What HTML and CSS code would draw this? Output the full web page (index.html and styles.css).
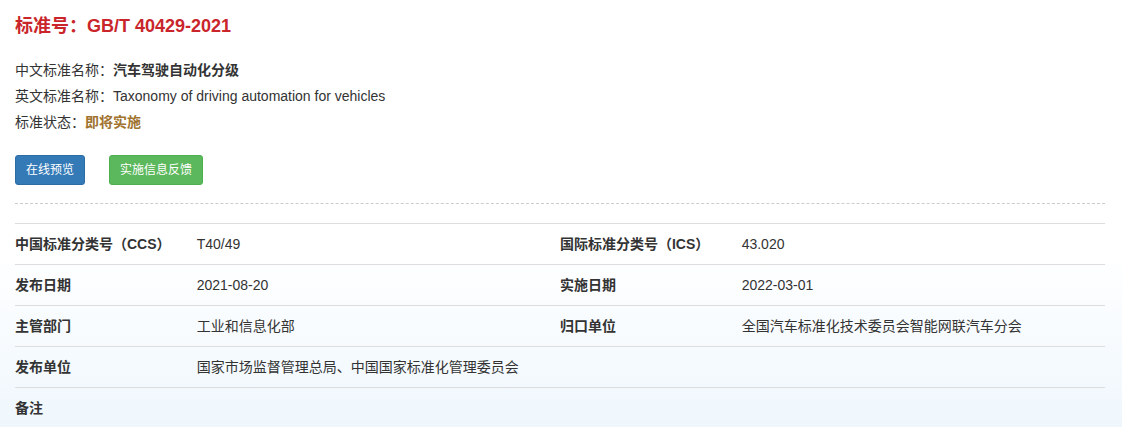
FILE: index.html
```html
<!DOCTYPE html>
<html lang="zh-CN">
<head>
<meta charset="utf-8">
<title>GB/T 40429-2021</title>
<link rel="stylesheet" href="styles.css">
</head>
<body>
<div class="page">
  <h1 class="title">标准号：GB/T 40429-2021</h1>
  <div class="info">
    <div class="info-line">中文标准名称：<b>汽车驾驶自动化分级</b></div>
    <div class="info-line">英文标准名称：Taxonomy of driving automation for vehicles</div>
    <div class="info-line">标准状态：<b class="status">即将实施</b></div>
  </div>
  <div class="actions">
    <a class="btn btn-blue">在线预览</a>
    <a class="btn btn-green">实施信息反馈</a>
  </div>
  <div class="divider"></div>
  <table class="detail">
    <colgroup>
      <col class="c-label"><col class="c-value"><col class="c-label"><col class="c-value">
    </colgroup>
    <tr>
      <th>中国标准分类号（CCS）</th><td>T40/49</td>
      <th>国际标准分类号（ICS）</th><td>43.020</td>
    </tr>
    <tr>
      <th>发布日期</th><td>2021-08-20</td>
      <th>实施日期</th><td>2022-03-01</td>
    </tr>
    <tr>
      <th>主管部门</th><td>工业和信息化部</td>
      <th>归口单位</th><td>全国汽车标准化技术委员会智能网联汽车分会</td>
    </tr>
    <tr>
      <th>发布单位</th><td colspan="3">国家市场监督管理总局、中国国家标准化管理委员会</td>
    </tr>
    <tr>
      <th>备注</th><td colspan="3"></td>
    </tr>
  </table>
</div>
</body>
</html>
```
FILE: styles.css
```css
html, body {
  margin: 0;
  padding: 0;
}
body {
  font-family: "Liberation Sans", "Noto Sans CJK SC", sans-serif;
  font-size: 14px;
  color: #333;
  background: linear-gradient(to bottom, #ffffff 0px, #ffffff 250px, #eff7fd 427px);
  min-height: 427px;
}
.page {
  padding: 15px 17px 0 15px;
}
.title {
  margin: 0;
  font-size: 18px;
  line-height: 22px;
  font-weight: bold;
  color: #c9252b;
}
.info {
  margin-top: 20px;
}
.info-line {
  line-height: 26px;
}
.info-line b {
  font-weight: bold;
}
.status {
  color: #a0732f;
}
.actions {
  display: flex;
  gap: 24px;
  margin-top: 20px;
}
.btn {
  display: inline-block;
  font-size: 12px;
  line-height: 18px;
  padding: 5px 10px;
  border: 1px solid transparent;
  border-radius: 3px;
  color: #fff;
}
.btn-blue {
  background: #337ab7;
  border-color: #2e6da4;
}
.btn-green {
  background: #5cb85c;
  border-color: #4cae4c;
}
.divider {
  margin-top: 18px;
  border-top: 1px dashed #ccc;
}
.detail {
  margin-top: 19px;
  width: 100%;
  border-collapse: collapse;
  table-layout: fixed;
}
.c-label { width: 16.6667%; }
.c-value { width: 33.3333%; }
.detail th, .detail td {
  text-align: left;
  padding: 10px 0;
  line-height: 20px;
  border-top: 1px solid #ddd;
  vertical-align: top;
}
.detail th {
  font-weight: bold;
}
.detail td {
  font-weight: normal;
}
```
